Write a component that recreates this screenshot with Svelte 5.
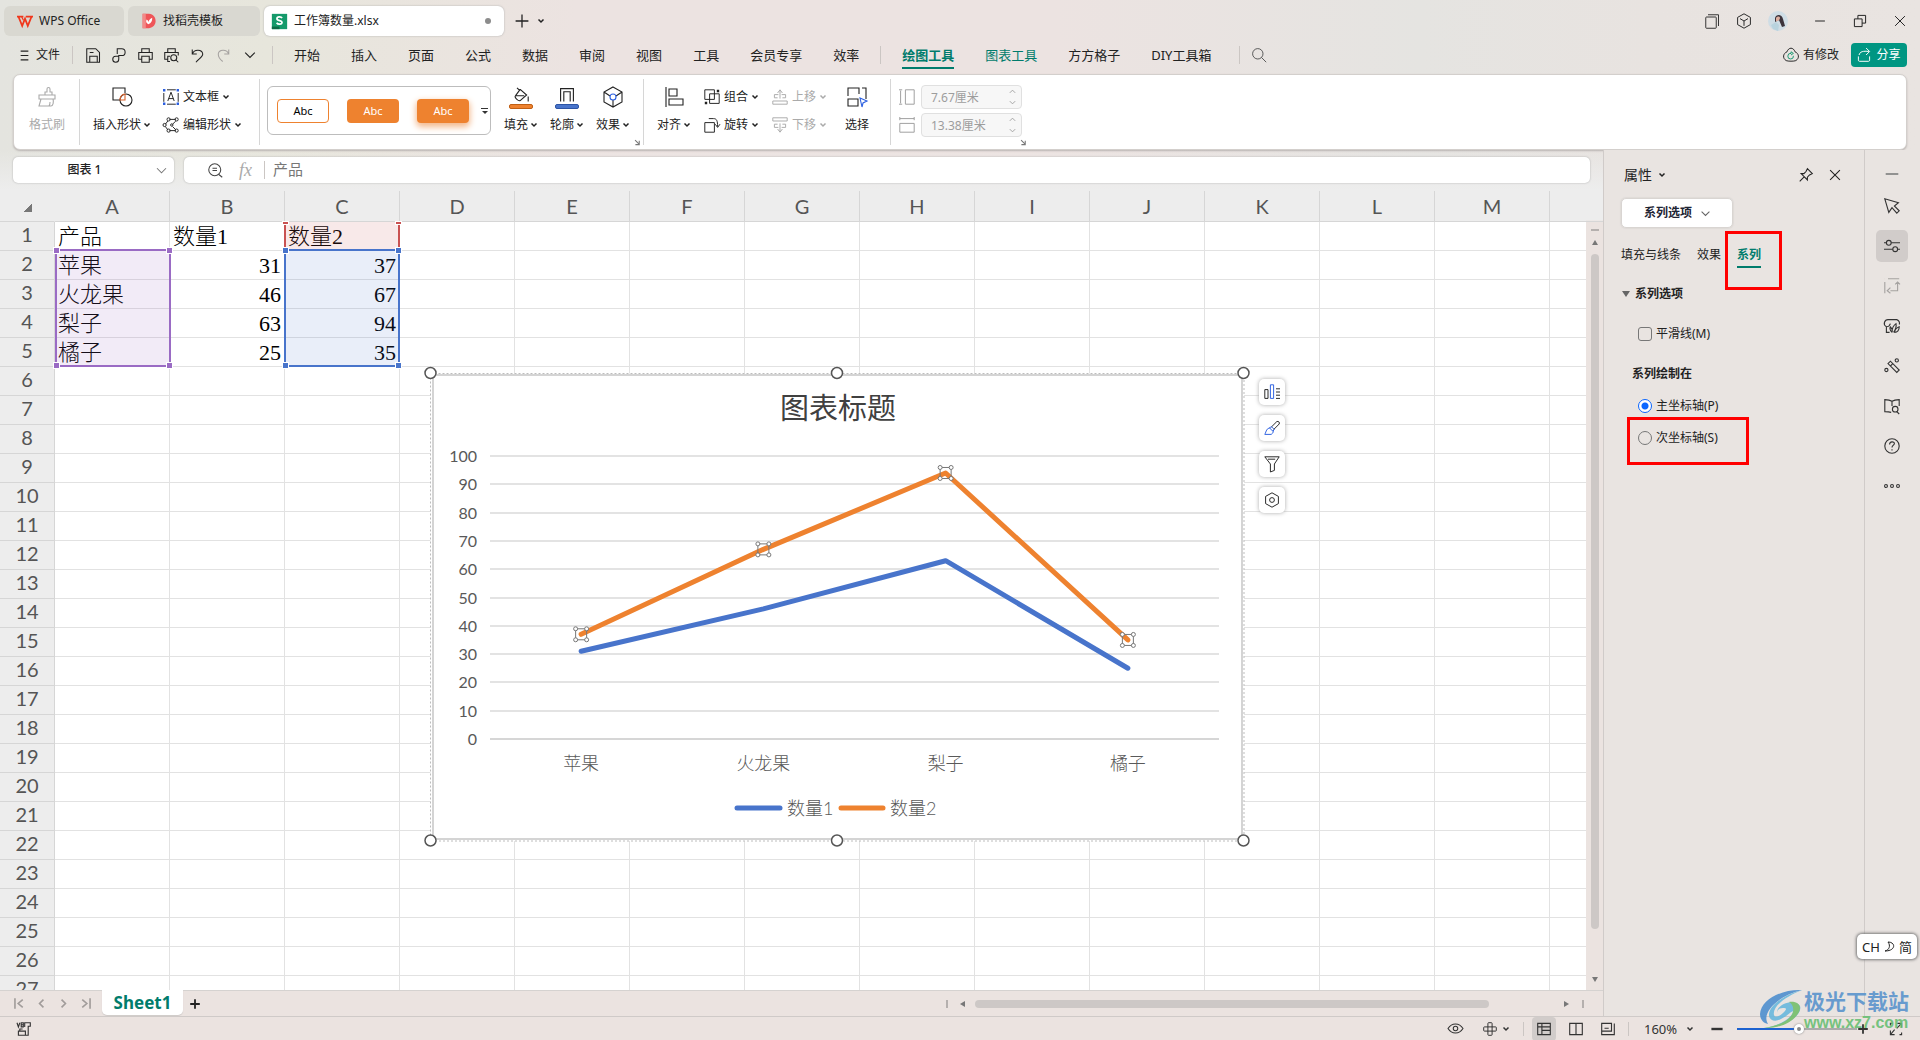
<script lang="ts">
	const icons: Record<string, string> = {
		wps: '<path d="M0 4.500h8M2 5l4.500 11L10 7l3.500 9L18 5M11 4.500h9" stroke="#f0371c" stroke-width="2.200"/><path d="M6 5l2 4" stroke="#f0371c" stroke-width="1.500"/>',
		docer: '<path d="M2 1h8c11 1 11 17 0 18H2z" fill="#ef5558" stroke="none"/><path d="M2 1h4v18H2z" fill="#f28a88" stroke="none"/><path d="M9 14c-3-2-3-4-2-6 2 1 3 3 2 6 0-4 2-7 5-8 0 4-1 7-5 8z" fill="#fff" stroke="none"/>',
		sheet: '<path d="M1 1h18v18H1z" fill="#159a6b" stroke="none"/><path d="M1 16h9v3H1z" fill="#0c6a45" stroke="none"/><path d="M13 6c-1-2-6-2-6 .8 0 2.900 6 1.600 6 4.200 0 2.800-5 2.800-6.300.5" stroke="#fff" stroke-width="2"/>',
		plus: '<path d="M10 2v16M2 10h16"/>',
		chevron: '<path d="M4 7l6 6 6-6"/>',
		menu: '<path d="M3 2h14M3 10h14M3 18h14"/>',
		save: '<path d="M1 1h12l5 5v13H1zM5 19v-8h10v8M5 6h5"/>',
		link: '<path d="M7 8V1h6a4.500 4.500 0 0 1 0 9H9v5a4 4 0 1 1-4-4h4"/>',
		print: '<path d="M5 6V1h10v5M5 15H1V6h18v9h-4M5 11h10v8H5z"/>',
		preview: '<path d="M5 6V1h10v5M5 15H1V6h18v4M8 18H5v-7h3M16 16l3 3"/><circle cx="13" cy="13" r="4"/>',
		undo: '<path d="M3 2v6h6M3 8c3-7 13-6 14 0 0 4-6 7-9 11"/>',
		redo: '<path d="M17 2v6h-6M17 8C14 1 4 2 3 8c0 4 2 7 6 10"/>',
		search: '<circle cx="8.500" cy="8.500" r="6.500"/><path d="M13 13l6 6"/>',
		windows: '<rect x="1" y="4" width="14" height="15" rx="1"/><path d="M4 1h14v15"/>',
		cube: '<path d="M10 1l8 4.500v9L10 19l-8-4.500v-9zM5 7l5 3 5-3M10 10v6"/>',
		minus: '<path d="M3 10h14"/>',
		restore: '<path d="M2 7h11v11H2zM7 7V2h11v11h-5"/>',
		close: '<path d="M3 3l14 14M17 3L3 17"/>',
		cloud: '<path d="M5 6c2-6 8-6 10 0 5 2 6 8 1 11-2 1-10 1-12 0-5-3-4-9 1-11z"/><path d="M13 11a3.500 3.500 0 1 1-3-3V6l3 2-3 2" stroke="#1a9a72"/>',
		share: '<path d="M2 12v5c0 2 1 2 2 2h12c1 0 2 0 2-2v-5M3 10c1-5 6-6 14-5M13 0l5 5-5 5"/>',
		brush: '<path d="M2 8h16v4H2zM4 12L2 19h12c2 0 3-4 2-7M8 8V5h2V2c0-2 3-2 3 0v3h2v3M12 19c1-1 1-2 1-4"/>',
		shapes: '<path d="M13 6V1H1v12h7"/><circle cx="14" cy="13" r="6"/><path d="M13 7v6H8c0-3 2-6 5-6z" stroke="#d9622b"/>',
		textbox: '<path d="M1 5v11M19 5v11M5 1h11M5 19h11"/><path d="M6 15l4-11 4 11M7 12h6"/><path d="M0 0h3v3H0zM17 0h3v3h-3zM0 17h3v3H0zM17 17h3v3h-3z" fill="#2b5fe0" stroke="none"/>',
		editshape: '<path d="M8 3h8M6 5l-3 4M3 12l3 4M8 17h8M16 5l-4 4M12 12l4 4"/><circle cx="7" cy="3" r="2"/><circle cx="17" cy="3" r="2"/><circle cx="2" cy="10" r="2"/><circle cx="11" cy="10" r="1.500"/><circle cx="7" cy="17" r="2"/><circle cx="17" cy="17" r="2"/>',
		bucket: '<path d="M5 1l3 3M9 3l8 7-8 7c-2 1-8-4-6-6l6-8M3 11h11M19 12v6"/>',
		outline: '<path d="M2 18V2h16v16M6 18V6h8v12"/>',
		effect: '<path d="M10 0l9 5v10l-9 5-9-5V5zM1 5l6 4M19 5l-6 4M10 13v7"/><circle cx="10" cy="10" r="3" stroke="#2b5fe0"/>',
		align: '<path d="M2 0v20M5 2h8v7H5zM5 12h14v6H5z"/>',
		group: '<path d="M1 1h12v12H1zM7 6h12v12H7z"/><path d="M16 1h3v3h-3zM1 16h3v3H1z" fill="currentColor" stroke="none"/>',
		rotate: '<path d="M1 7h12v12H1zM6 2h6c4 0 5 3 5 10M14 9l3 4 3-4"/>',
		up: '<path d="M1 15h18v4H1zM7 11H3V7h5M12 7h5v4h-4M10 12V2M7 5l3-4 3 4"/>',
		down: '<path d="M1 1h18v4H1zM7 9H3v4h5M12 13h5V9h-4M10 8v10M7 15l3 4 3-4"/>',
		select: '<path d="M1 9V1h11v6M15 1h4v11M1 12v7h10v-7z"/><path d="M13 11l7 3-4 2-1 4z" stroke="#2b5fe0"/>',
		height: '<path d="M2 2v16M0 1h4M0 19h4M8 1h11v18H8z"/>',
		width: '<path d="M1 2h18M1 0v4M19 0v4M1 8h18v11H1z"/>',
		corner: '<path d="M3 3l11 11M15 5v11H4"/>',
		zoom: '<circle cx="9" cy="9" r="8"/><path d="M14 15l5 4M6 7h6M6 10h6"/>',
		pin: '<path d="M12 1l7 7-4 2-3 3v4L3 8h4l3-3zM7 13l-6 6"/>',
		cursor: '<path d="M1 1l5 17 4-6 6 7 3-3-6-6 5-4z"/>',
		sliders: '<path d="M0 6h3M9 6h11M0 14h11M17 14h3"/><circle cx="6" cy="6" r="3"/><circle cx="14" cy="14" r="3"/>',
		axes: '<path d="M1 5v14M5 1h14M1 1h.1M8 16h9V6M14 8l3-3 3 3M8 12l-4 4 4 3"/>',
		gallery: '<path d="M7 18H3v-7C-2 8 1 2 5 2h11c3 1 4 4 3 6M3 11c2 0 4-1 5-4M10 18c-3-3-3-6-2-7 2 2 3 4 2 7 0-6 2-9 5-11 1 5-1 8-3 11M13 18c1-4 3-6 6-7 0 4-2 7-6 7"/>',
		magic: '<path d="M5 7l3-3 11 11-3 3zM8 10l3-3"/><circle cx="16" cy="3" r="2"/><circle cx="3" cy="15" r="2"/>',
		book: '<path d="M10 4C7 2 4 2 1 2v15c3 0 5 0 8 1M10 4c3-2 6-2 9-2v8M10 4v6M16 17l3 3"/><circle cx="14" cy="14" r="3.500"/>',
		help: '<circle cx="10" cy="10" r="9"/><path d="M7 8c0-4 6-4 6-1 0 2-3 2-3 5M10 14v1.500"/>',
		more: '<circle cx="2.500" cy="10" r="1.800"/><circle cx="10" cy="10" r="1.800"/><circle cx="17.500" cy="10" r="1.800"/>',
		chartEl: '<path d="M1 7h4v11H1zM15 6h5M15 10h5M15 14h5M15 18h5"/><path d="M8 1h4v17H8z" stroke="#2b5fe0"/>',
		chartBrush: '<path d="M9 9l7-7c2-1 4 1 3 3l-7 7"/><path d="M9 8l4 4-2 2-4-4zM8 10c-5 0-5 4-7 8h8c3-2 3-4 2-5" stroke="#2b5fe0"/>',
		filter: '<path d="M1 1h18l-6 9v8l-5 2V10zM5 4h9"/>',
		hexagon: '<path d="M10 1l8 4.500v9L10 19l-8-4.500v-9z"/><circle cx="10" cy="10" r="3"/>',
		first: '<path d="M3 2v16M15 4l-7 6 7 6"/>',
		prev: '<path d="M13 4l-6 6 6 6"/>',
		next: '<path d="M7 4l6 6-6 6"/>',
		last: '<path d="M17 2v16M5 4l7 6-7 6"/>',
		vb: '<path d="M0 1l2 6 2-6M6 1h3v6H6zM6 4h3M11 7V1h8v5h-3v13H2v-6h10v6M4 13v-3h4"/>',
		eye: '<path d="M0 10c5-8 15-8 20 0-5 8-15 8-20 0z"/><circle cx="10" cy="10" r="3"/>',
		cross: '<rect x="7" y="1" width="6" height="18" rx="1"/><rect x="1" y="7" width="18" height="6" rx="1"/>',
		gridview: '<path d="M1 2h18v16H1zM1 7h18M7 2v16M7 12h12"/>',
		pageview: '<path d="M1 2h18v16H1zM10 2v16"/>',
		readview: '<path d="M1 2h14v11H1zM1 13v5h18V2M5 9h6"/>',
		full: '<path d="M12 2h6v6M18 2l-7 7M8 18H2v-6M2 18l6-7M5 2H2v3M18 15v3h-3"/>'
	};

	const quick = ['save', 'link', 'print', 'preview', 'undo', 'redo'];
	const menus = ['开始', '插入', '页面', '公式', '数据', '审阅', '视图', '工具', '会员专享', '效率'];
	const rail = ['cursor', 'sliders', 'axes', 'gallery', 'magic', 'book', 'help', 'more'];
	const columns = 'ABCDEFGHIJKLMN'.split('');
	const data = [
		['产品', '数量1', '数量2'],
		['苹果', 31, 37],
		['火龙果', 46, 67],
		['梨子', 63, 94],
		['橘子', 25, 35]
	];
	const rows = Array.from({ length: 27 }, (_, i) => i);

	const names = data.slice(1).map((r) => r[0]);
	const ticks = [0, 10, 20, 30, 40, 50, 60, 70, 80, 90, 100];
	const px = (i: number) => 60 + (729 * (i + 0.5)) / 4;
	const py = (v: number) => 366 - 2.83 * v;
	const line = (col: number) => data.slice(1).map((r, i) => `${px(i)},${py(Number(r[col]))}`).join(' ');

	let axis = $state('primary');
	let smooth = $state(false);
	let zoom = $state(52);
</script>

{#snippet icon(name: string, size = 16, weight = 1.2)}
	<svg class="icon" width={size} height={size} viewBox="0 0 20 20" stroke-width={weight} aria-hidden="true">
		{@html icons[name]}
	</svg>
{/snippet}

{#snippet caret()}
	<svg class="icon" width="6" height="6" viewBox="0 0 6 6" stroke-width="1.5" aria-hidden="true"><path d="M.5 1.500L3 4l2.500-2.500" /></svg>
{/snippet}

{#snippet tall(name: string, label: string, drop: boolean, bar = '')}
	<button class="tall">
		<span class="pic">
			{@render icon(name, bar ? 16 : 20, bar ? 1.4 : 1.1)}
			{#if bar}<span class="bar {bar}"></span>{/if}
		</span>
		<span class="lbl">{label}{#if drop}{@render caret()}{/if}</span>
	</button>
{/snippet}

{#snippet small(name: string, label: string, off = false)}
	<button class="small" disabled={off}>{@render icon(name)}<span>{label}</span>{@render caret()}</button>
{/snippet}

<div class="app">
	<header class="title">
		<button class="doc home">{@render icon('wps', 16)}WPS Office</button>
		<button class="doc docer">{@render icon('docer', 16)}找稻壳模板</button>
		<button class="doc active">{@render icon('sheet', 17)}工作簿数量.xlsx<i class="dirty"></i></button>
		<button class="new" aria-label="新建">{@render icon('plus', 16, 1.6)}</button>
		<button aria-label="标签列表">{@render caret()}</button>
		<div class="win">
			<button aria-label="窗口">{@render icon('windows', 15)}</button>
			<button aria-label="应用">{@render icon('cube', 16)}</button>
			<svg class="avatar" width="20" height="20" viewBox="0 0 20 20" aria-hidden="true">
				<circle cx="10" cy="10" r="10" fill="#cfdde5" />
				<path d="M7 7c1-4 7-4 8 1l2 7-3 1-3-7-4 2z" fill="#3b333b" />
				<path d="M8 7c1-2 4-2 4 0s-3 4-4 3z" fill="#dcae9f" />
				<path d="M3 14l5-3 3 3-1 6-5-2z" fill="#b9d3de" />
			</svg>
			<button class="wide" aria-label="最小化">{@render icon('minus', 14, 1.4)}</button>
			<button class="wide" aria-label="还原">{@render icon('restore', 14, 1.4)}</button>
			<button class="wide" aria-label="关闭">{@render icon('close', 14, 1.4)}</button>
		</div>
	</header>

	<nav class="menubar">
		<button class="file">{@render icon('menu', 11, 2)}文件</button>
		<i class="sep"></i>
		<div class="quick">
			{#each quick as q}
				<button class:faded={q === 'redo'} aria-label={q}>{@render icon(q, 15, 1.4)}</button>
			{/each}
			<button aria-label="更多">{@render icon('chevron', 16, 1.4)}</button>
		</div>
		<i class="sep"></i>
		<div class="menus">
			{#each menus as m}<button>{m}</button>{/each}
			<i class="sep"></i>
			<button class="current">绘图工具</button>
			<button class="green">图表工具</button>
			<button>方方格子</button>
			<button>DIY工具箱</button>
		</div>
		<i class="sep"></i>
		<button class="find" aria-label="搜索">{@render icon('search', 16)}</button>
		<button class="changed">{@render icon('cloud', 16)}有修改</button>
		<button class="share">{@render icon('share', 14, 1.4)}分享</button>
	</nav>

	<section class="ribbon">
		<div class="group paint">{@render tall('brush', '格式刷', false)}</div>
		<div class="group insert">
			{@render tall('shapes', '插入形状', true)}
			<div class="pair">
				{@render small('textbox', '文本框')}
				{@render small('editshape', '编辑形状')}
			</div>
		</div>
		<div class="group style">
			<div class="gallery">
				<button class="abc hollow">Abc</button>
				<button class="abc">Abc</button>
				<button class="abc glow">Abc</button>
				<button class="expand" aria-label="更多样式"></button>
			</div>
			{@render tall('bucket', '填充', true, 'orange')}
			{@render tall('outline', '轮廓', true, 'blue')}
			{@render tall('effect', '效果', true)}
			<button class="launch" aria-label="设置形状格式">{@render icon('corner', 7, 3)}</button>
		</div>
		<div class="group arrange">
			{@render tall('align', '对齐', true)}
			<div class="pair">
				{@render small('group', '组合')}
				{@render small('rotate', '旋转')}
			</div>
			<div class="pair off">
				{@render small('up', '上移', true)}
				{@render small('down', '下移', true)}
			</div>
			{@render tall('select', '选择', false)}
		</div>
		<div class="group size">
			<div class="dims">
				<label>{@render icon('height')}<input value="7.67厘米" aria-label="高度" disabled /><span class="spin">{@render icon('next', 9, 2)}{@render icon('next', 9, 2)}</span></label>
				<label>{@render icon('width')}<input value="13.38厘米" aria-label="宽度" disabled /><span class="spin">{@render icon('next', 9, 2)}{@render icon('next', 9, 2)}</span></label>
			</div>
			<button class="launch" aria-label="大小和属性">{@render icon('corner', 7, 3)}</button>
		</div>
	</section>

	<div class="work">
		<main>
			<div class="formula">
				<div class="namebox">
					<input value="图表 1" aria-label="名称框" />
					<button aria-label="名称列表">{@render icon('chevron', 15, 1.4)}</button>
				</div>
				<div class="fx">
					{@render icon('zoom', 15, 1.4)}
					<em>fx</em>
					<i class="sep"></i>
					<input value="产品" aria-label="编辑栏" />
				</div>
			</div>

			<div class="sheet">
				<div class="cells">
					<table>
						<thead>
							<tr>
								<th class="all"><i></i></th>
								{#each columns as c}<th>{c === 'N' ? '' : c}</th>{/each}
							</tr>
						</thead>
						<tbody>
							{#each rows as r}
								<tr>
									<th>{r + 1}</th>
									{#each columns as _, c}
										<td class:num={typeof data[r]?.[c] === 'number'}>{data[r]?.[c] ?? ''}</td>
									{/each}
								</tr>
							{/each}
						</tbody>
					</table>

					<div class="range purple"><i></i><i></i><i></i><i></i></div>
					<div class="range red"><i></i><i></i></div>
					<div class="range navy"><i></i><i></i><i></i><i></i></div>

					<svg class="chart" width="814" height="468" viewBox="0 0 814 468">
						<rect x=".5" y=".5" width="813.500" height="467.500" fill="#fff" stroke="#bdbdbd" stroke-dasharray="2 2" />
						<rect x="3" y="2" width="809" height="464" fill="#fff" stroke="#d4d4d4" stroke-width="2" />
						<text class="heading" x="408" y="46">图表标题</text>
						{#each ticks as t}
							<line x1="60" x2="789" y1={Math.round(py(t))} y2={Math.round(py(t))} stroke={t ? '#e3e3e3' : '#d6d6d6'} stroke-width="2" />
							<text class="tick" x="47" y={Math.round(py(t)) + 6}>{t}</text>
						{/each}
						{#each names as n, i}
							<text class="cat" x={px(i)} y="397">{n}</text>
						{/each}
						<polyline points={line(1)} stroke="#4874cb" />
						<polyline points={line(2)} stroke="#ee822f" />
						{#each data.slice(1) as d, i}
							<g class="marker" transform="translate({px(i)} {py(Number(d[2]))})">
								<path d="M-5.500-5.500h11v11h-11z" fill="none" />
								{#each [[-5.5, -5.5], [5.5, -5.5], [-5.5, 5.5], [5.5, 5.5]] as [x, y]}
									<circle cx={x} cy={y} r="2" />
								{/each}
							</g>
						{/each}
						<polyline points="307,435 350,435" stroke="#4874cb" />
						<text class="key" x="357" y="442">数量1</text>
						<polyline points="411,435 453,435" stroke="#ee822f" />
						<text class="key" x="460" y="442">数量2</text>
						{#each [0.5, 407, 813.5] as x}
							{#each [0, 467.5] as y}
								<circle class="handle" cx={x} cy={y} r="5.500" />
							{/each}
						{/each}
					</svg>

					<div class="tools">
						<button aria-label="图表元素">{@render icon('chartEl')}</button>
						<button aria-label="图表样式">{@render icon('chartBrush')}</button>
						<button aria-label="图表筛选器">{@render icon('filter')}</button>
						<button aria-label="设置图表区域格式">{@render icon('hexagon')}</button>
					</div>
				</div>
				<div class="vscroll">
					<i class="dash"></i>
					<i class="tri up"></i>
					<i class="thumb"></i>
					<i class="tri dn"></i>
				</div>
			</div>

			<div class="tabs">
				<div class="nav">
					{#each ['first', 'prev', 'next', 'last'] as n}
						<button aria-label={n}>{@render icon(n, 13, 2.5)}</button>
					{/each}
				</div>
				<button class="tab">Sheet1</button>
				<button class="add" aria-label="新建工作表">{@render icon('plus', 12, 3)}</button>
				<div class="hscroll">
					<i class="stop"></i>
					<i class="tri lt"></i>
					<i class="thumb"></i>
					<i class="tri rt"></i>
					<i class="stop"></i>
				</div>
			</div>
		</main>

		<aside class="panel">
			<div class="head">
				<span>属性</span>{@render caret()}
				<button class="pin" aria-label="固定">{@render icon('pin', 14, 1.5)}</button>
				<button aria-label="关闭">{@render icon('close', 14, 1.5)}</button>
			</div>
			<div class="pick">
				<select aria-label="图表区域"><option>系列选项</option></select>
				{@render icon('chevron', 13, 1.6)}
			</div>
			<div class="ptabs">
				<button>填充与线条</button>
				<button>效果</button>
				<button class="on">系列</button>
			</div>
			<h3><i></i>系列选项</h3>
			<label class="opt smooth"><input type="checkbox" bind:checked={smooth} />平滑线(M)</label>
			<h4>系列绘制在</h4>
			<label class="opt"><input type="radio" name="axis" value="primary" bind:group={axis} />主坐标轴(P)</label>
			<label class="opt"><input type="radio" name="axis" value="secondary" bind:group={axis} />次坐标轴(S)</label>
			<div class="callout first"></div>
			<div class="callout second"></div>
		</aside>

		<nav class="rail">
			<button class="fold" aria-label="收起">{@render icon('minus', 18, 2)}</button>
			{#each rail as r}
				<button class:on={r === 'sliders'} class:faded={r === 'axes'} aria-label={r}>{@render icon(r, 16, 1.4)}</button>
			{/each}
		</nav>
	</div>

	<footer class="status">
		{@render icon('vb', 14, 1.6)}
		<button class="eye" aria-label="护眼模式">{@render icon('eye', 15, 1.4)}</button>
		<button class="cross" aria-label="阅读模式">{@render icon('cross', 14, 1.4)}{@render caret()}</button>
		<i class="sep"></i>
		<div class="views">
			<button class="on" aria-label="普通视图">{@render icon('gridview', 14, 1.6)}</button>
			<button aria-label="分页预览">{@render icon('pageview', 14, 1.6)}</button>
			<button aria-label="阅读视图">{@render icon('readview', 14, 1.6)}</button>
		</div>
		<i class="sep"></i>
		<div class="percent">
			<select aria-label="缩放比例"><option>160%</option></select>{@render caret()}
		</div>
		<button aria-label="缩小">{@render icon('minus', 16, 3)}</button>
		<input
			class="slider"
			type="range"
			aria-label="缩放"
			bind:value={zoom}
			style="background-size: {zoom}% 2px, 100% 2px"
		/>
		<button aria-label="放大">{@render icon('plus', 12, 3)}</button>
		<button class="full" aria-label="全屏">{@render icon('full', 14, 1.6)}</button>
	</footer>

	<div class="ime"><span>CH</span><svg class="icon" width="11" height="12" viewBox="0 0 11 12" stroke-width="1"><path d="M4 1c8 0 8 9-3 9 4-1 6-5 3-9z" /></svg><span>简</span></div>

	<div class="mark">
		<svg width="44" height="42" viewBox="0 0 44 42" aria-hidden="true">
			<path d="M43 1C22 0 2 11 1 25c0 5 3 9 8 10C2 24 18 7 43 1z" fill="#4f8fcf" />
			<path d="M43 1C28 7 13 17 15 26c1 3 6 1 9-2 4-4 4-5 0-5-5 0-6 3-6 5C17 15 36 9 41 17c3 9-15 22-36 22 14-2 27-9 29-16 0-3-4 3-12 7-5 3-11 2-12-3C9 16 27 5 43 1z" fill="#6ab8dd" />
			<path d="M30 13c9-1 13 4 10 10-5 10-20 17-35 16 15-2 27-8 29-16 1-5-1-8-4-10z" fill="#75bf6b" />
		</svg>
		<div>
			<strong>极光下载站</strong>
			<b>www.xz7.com</b>
		</div>
	</div>
</div>

<style>
	:global(body) {
		margin: 0;
		background: #e9e4e1;
	}

	.app {
		position: relative;
		display: flex;
		flex-direction: column;
		height: 100vh;
		overflow: hidden;
		color: #222;
		font-family: 'Noto Sans', 'Noto Sans CJK SC', sans-serif;
		font-size: 12px;
		line-height: 20px;
		background: linear-gradient(90deg, #e4e4df, #e7e6dc 14%, #ece3e1 30%, #ece3e1 55%, #e5e4e1 74%, #e8e3e0 86%, #e9e4e1);
	}

	button,
	input,
	select {
		margin: 0;
		padding: 0;
		border: none;
		background: none;
		color: inherit;
		font: inherit;
		appearance: none;
	}

	button {
		display: flex;
		align-items: center;
		justify-content: center;
		white-space: nowrap;
	}

	input:focus,
	select:focus {
		outline: none;
	}

	.icon {
		flex: none;
		fill: none;
		stroke: currentColor;
		overflow: visible;
	}

	.sep {
		flex: none;
		width: 1px;
		height: 18px;
		background: #cbc6c3;
	}

	.faded {
		color: #a5a2a0;
	}

	/* title bar */
	.title {
		display: flex;
		align-items: center;
		gap: 4px;
		height: 30px;
		padding: 6px 13px 0 4px;
	}

	.doc {
		height: 30px;
		box-sizing: border-box;
		justify-content: flex-start;
		gap: 6px;
		border-radius: 6px;
		background: #d9d8d1;
	}

	.home {
		width: 120px;
		padding-left: 13px;
	}

	.docer {
		width: 132px;
		padding-left: 13px;
	}

	.active {
		width: 240px;
		padding: 0 13px 0 7px;
		background: #fff;
		box-shadow: 0 0 2px #aaa;
	}

	.dirty {
		width: 6px;
		height: 6px;
		margin-left: auto;
		border-radius: 50%;
		background: #8c8c8c;
	}

	.new {
		margin: 0 4px 0 6px;
	}

	.win {
		display: flex;
		align-items: center;
		gap: 16px;
		margin-left: auto;
	}

	.wide {
		width: 24px;
	}

	.avatar {
		margin-right: 4px;
	}

	.wide:last-child {
		width: 14px;
		margin-left: 5px;
	}

	/* menu bar */
	.menubar {
		display: flex;
		align-items: center;
		height: 38px;
		padding: 0 13px 0 19px;
	}

	.file {
		gap: 6px;
		margin-right: 12px;
	}

	.quick {
		display: flex;
		gap: 11px;
		margin: 0 14px 0 13px;
	}

	.menus {
		display: flex;
		align-items: center;
		gap: 31px;
		margin: 0 28px 0 21px;
		font-size: 13px;
	}

	.menus .sep {
		margin: 0 -10px;
	}

	.menus button {
		height: 28px;
	}

	.menus .current {
		box-sizing: border-box;
		color: #007c6c;
		font-weight: 700;
		border-top: 2px solid transparent;
		border-bottom: 2px solid #007c6c;
	}

	.green {
		color: #007c6c;
	}

	.find {
		margin-left: 11px;
		color: #555;
	}

	.changed {
		gap: 4px;
		margin: 0 12px 0 auto;
	}

	.share {
		width: 56px;
		height: 24px;
		gap: 5px;
		border-radius: 4px;
		background: #009682;
		color: #fff;
	}

	/* ribbon */
	.ribbon {
		display: flex;
		flex: none;
		height: 76px;
		box-sizing: border-box;
		margin: 0 13px;
		border: 1px solid #d3cfcc;
		border-radius: 7px;
		background: #fff;
		box-shadow: 0 1px 2px #b9b4b2;
	}

	.group {
		position: relative;
		display: flex;
		align-items: flex-start;
		box-sizing: border-box;
		padding-top: 12px;
	}

	.group:not(:last-child)::after {
		content: '';
		position: absolute;
		right: 0;
		top: 4px;
		bottom: 4px;
		width: 1px;
		background: #d6d6d6;
	}

	.paint {
		width: 66px;
		justify-content: center;
		color: #aaa;
	}

	.insert {
		width: 180px;
		padding-left: 13px;
		gap: 13px;
	}

	.style {
		width: 384px;
		padding-left: 7px;
		gap: 13px;
	}

	.arrange {
		width: 247px;
		padding-left: 13px;
		gap: 14px;
	}

	.arrange .off {
		margin-right: 5px;
	}

	.size {
		width: 139px;
		padding: 10px 0 0 8px;
	}

	.tall {
		flex-direction: column;
		gap: 6px;
	}

	.pic {
		display: flex;
		flex-direction: column;
		align-items: center;
		justify-content: space-between;
		height: 22px;
	}

	.bar {
		width: 22px;
		height: 3px;
		border: 1px solid #c05f14;
		border-radius: 2px;
		background: #ee822f;
	}

	.bar.blue {
		border-color: #2d55a5;
		background: #4874cb;
	}

	.lbl {
		display: flex;
		align-items: center;
		gap: 3px;
	}

	.pair {
		display: flex;
		flex-direction: column;
		align-items: flex-start;
		gap: 8px;
	}

	.small {
		height: 20px;
		gap: 4px;
	}

	.small:disabled {
		color: #aaa;
	}

	.gallery {
		display: flex;
		align-items: center;
		gap: 18px;
		width: 224px;
		height: 49px;
		box-sizing: border-box;
		margin-top: -1px;
		padding-left: 9px;
		border: 1px solid #bdbdbd;
		border-radius: 6px;
	}

	.abc {
		flex: none;
		width: 52px;
		height: 24px;
		box-sizing: border-box;
		border-radius: 4px;
		background: #ee822f;
		color: #fff;
		font-size: 11px;
	}

	.hollow {
		border: 1px solid #ee822f;
		background: #fff;
		color: #000;
	}

	.glow {
		box-shadow: 0 3px 6px 1px #f3b98e;
	}

	.expand {
		margin-left: -6px;
		width: 7px;
		border-top: 1px solid #333;
		padding-top: 2px;
	}

	.expand::after {
		content: '';
		border: 3px solid transparent;
		border-top-color: #333;
		border-bottom: 0;
	}

	.launch {
		position: absolute;
		right: 3px;
		bottom: 3px;
		color: #777;
	}

	.dims {
		display: flex;
		flex-direction: column;
		gap: 4px;
	}

	.dims label {
		display: flex;
		align-items: center;
		gap: 6px;
		height: 24px;
		color: #9d9d9d;
	}

	.dims input {
		width: 101px;
		height: 24px;
		box-sizing: border-box;
		padding-left: 9px;
		border: 1px solid #e0e0e0;
		border-radius: 4px;
		background: #f7f7f7;
	}

	.spin {
		display: flex;
		flex-direction: column;
		gap: 2px;
		margin-left: -20px;
	}

	.spin .icon {
		transform: rotate(-90deg);
	}

	.spin .icon:last-child {
		transform: rotate(90deg);
	}

	/* main area */
	.work {
		display: grid;
		grid-template-columns: minmax(0, 1fr) 261px 56px;
		flex: 1;
		min-height: 0;
	}

	main {
		display: flex;
		flex-direction: column;
		min-height: 0;
		background: linear-gradient(#ede3e100, #ededed 40px, #ededed 70px, #ebe3e0 71px);
	}

	.formula {
		display: flex;
		gap: 10px;
		padding: 7px 13px 8px;
	}

	.namebox,
	.fx {
		display: flex;
		align-items: center;
		height: 26px;
		border-radius: 5px;
		background: #fff;
		box-shadow: 0 0 2px #aaa;
	}

	.namebox {
		width: 161px;
		color: #222;
	}

	.namebox input {
		flex: 1;
		min-width: 0;
		padding-left: 8px;
		text-align: center;
		font-weight: 500;
	}

	.namebox button {
		width: 26px;
		color: #777;
	}

	.fx {
		flex: 1;
		padding-left: 24px;
		color: #444;
	}

	.fx em {
		margin: 0 12px 0 16px;
		color: #aaa;
		font-family: 'Liberation Serif', serif;
		font-size: 18px;
	}

	.fx input {
		flex: 1;
		padding: 0 0 2px 8px;
		color: #777;
		font-size: 15px;
	}

	.sheet {
		display: flex;
		flex: 1;
		min-height: 0;
		border-bottom: 1px solid #d5d2d0;
	}

	.cells {
		position: relative;
		flex: 1;
		min-width: 0;
		overflow: hidden;
		background: #fff;
	}

	table {
		table-layout: fixed;
		width: 1665px;
		border-collapse: separate;
		border-spacing: 0;
	}

	th,
	td {
		width: 115px;
		height: 29px;
		box-sizing: border-box;
		padding: 0;
		border-right: 1px solid #e2e2e2;
		border-bottom: 1px solid #e2e2e2;
		line-height: 28px;
		white-space: nowrap;
	}

	th {
		background: #ededed;
		border-color: #d6d6d6;
		color: #555;
		font-family: Lato, sans-serif;
		font-size: 20px;
		font-weight: 400;
	}

	thead th {
		height: 31px;
	}

	tbody th {
		padding-bottom: 4px;
		line-height: 24px;
	}

	th:first-child {
		width: 55px;
	}

	.all {
		border-right-color: #ededed;
	}

	.all i {
		display: block;
		margin: 2px 0 0 23px;
		width: 9px;
		height: 9px;
		background: linear-gradient(135deg, transparent 50%, #777 50%);
	}

	td {
		padding: 2px 3px 0;
		color: #000;
		font-family: 'Liberation Serif', 'Noto Sans CJK SC', serif;
		font-size: 22px;
		font-weight: 300;
		line-height: 26px;
	}

	td.num {
		text-align: right;
	}

	.range {
		position: absolute;
		left: 284px;
		top: 58px;
		width: 112px;
		height: 114px;
		border: 2px solid #4874cb;
		background: #4874cb1f;
	}

	.range i {
		position: absolute;
		left: -4px;
		top: -4px;
		width: 5px;
		height: 5px;
		border: 1px solid #fff;
		background: #4874cb;
	}

	.range i:nth-child(2n) {
		left: auto;
		right: -4px;
	}

	.range i:nth-child(n + 3) {
		top: auto;
		bottom: -4px;
	}

	.purple {
		left: 55px;
		border-color: #9a6bc4;
		background: #9a6bc422;
	}

	.purple i {
		background: #9a6bc4;
	}

	.red {
		top: 31px;
		height: 29px;
		border-color: #c95252;
		border-width: 0 2px;
		background: #c9525220;
	}

	.red i {
		top: -1px;
		height: 2px;
		background: #c95252;
	}

	.chart {
		position: absolute;
		left: 430px;
		top: 182px;
		overflow: visible;
	}

	.chart text {
		font-family: Lato, 'Noto Sans CJK SC', sans-serif;
		fill: #595959;
	}

	.chart .heading {
		font-size: 29px;
		text-anchor: middle;
		fill: #404040;
	}

	.chart .tick {
		font-size: 16px;
		text-anchor: end;
	}

	.chart .cat {
		font-size: 18px;
		font-weight: 300;
		text-anchor: middle;
	}

	.chart .key {
		font-size: 18px;
		font-weight: 300;
	}

	.chart polyline {
		fill: none;
		stroke-width: 5;
		stroke-linecap: round;
		stroke-linejoin: round;
	}

	.marker {
		stroke: #777;
		fill: #fff;
	}

	.handle {
		fill: #fff;
		stroke: #555;
		stroke-width: 1.5;
	}

	.tools {
		position: absolute;
		left: 1259px;
		top: 188px;
		display: flex;
		flex-direction: column;
		gap: 10px;
	}

	.tools button {
		width: 26px;
		height: 26px;
		border-radius: 5px;
		background: #fff;
		box-shadow: 0 0 4px #aaa;
	}

	.vscroll {
		display: flex;
		flex-direction: column;
		align-items: center;
		width: 17px;
		margin-top: 30px;
		padding: 7px 0 8px;
		box-sizing: border-box;
		border-top: 1px solid #d6d6d6;
	}

	.dash {
		width: 8px;
		height: 2px;
		margin-bottom: 9px;
		background: #b5b0ae;
	}

	.tri {
		border: 3px solid transparent;
	}

	.tri.up {
		border-bottom: 5px solid #777;
		border-top: 0;
	}

	.tri.dn {
		border-top: 5px solid #777;
		border-bottom: 0;
	}

	.tri.lt {
		border-right: 5px solid #777;
		border-left: 0;
	}

	.tri.rt {
		border-left: 5px solid #777;
		border-right: 0;
	}

	.vscroll .thumb {
		flex: 1;
		width: 8px;
		margin: 9px 0 48px;
		border-radius: 4px;
		background: #cdc8c6;
	}

	.tabs {
		display: flex;
		align-items: center;
		height: 25px;
	}

	.nav {
		display: flex;
		gap: 9px;
		width: 89px;
		padding-left: 13px;
		color: #a19c9a;
	}

	.tab {
		width: 81px;
		height: 25px;
		margin-top: -2px;
		border-radius: 0 0 5px 5px;
		background: #fff;
		color: #007c6c;
		font-size: 17px;
		font-weight: 700;
		box-shadow: 0 1px 1px #cfcac8;
	}

	.add {
		margin-left: 6px;
	}

	.hscroll {
		display: flex;
		align-items: center;
		width: 638px;
		margin: 0 19px 0 auto;
	}

	.stop {
		width: 2px;
		height: 8px;
		background: #b5b0ae;
	}

	.lt {
		margin: 0 10px 0 12px;
	}

	.rt {
		margin: 0 13px 0 auto;
	}

	.hscroll .thumb {
		width: 514px;
		height: 8px;
		border-radius: 4px;
		background: #cdc8c6;
	}

	/* properties panel */
	.panel {
		position: relative;
		box-sizing: border-box;
		padding: 10px 22px 0 17px;
		border-left: 1px solid #d0cbc9;
		background: #e9e4e1;
	}

	.head {
		display: flex;
		align-items: center;
		gap: 7px;
		height: 30px;
		padding-left: 3px;
		font-size: 14px;
	}

	.pin {
		margin: 0 8px 0 auto;
	}

	.pick {
		display: flex;
		align-items: center;
		width: 112px;
		height: 30px;
		box-sizing: border-box;
		margin-top: 8px;
		padding-left: 22px;
		border: 1px solid #d9d5d2;
		border-radius: 5px;
		background: #fff;
		box-shadow: 0 0 1px 1px #dfdbd8;
	}

	.pick select {
		width: 55px;
		color: #1d2433;
		font-weight: 700;
	}

	.pick .icon {
		color: #666;
	}

	.ptabs {
		display: flex;
		gap: 16px;
		margin-top: 15px;
	}

	.ptabs button {
		box-sizing: border-box;
		height: 25px;
		border-bottom: 2px solid transparent;
	}

	.ptabs .on {
		border-color: #007c6c;
		color: #007c6c;
		font-weight: 700;
	}

	h3,
	h4 {
		margin: 0;
		font-size: 12px;
		font-weight: 700;
	}

	h3 {
		display: flex;
		align-items: center;
		gap: 5px;
		margin-top: 16px;
		padding-left: 1px;
	}

	h3 i {
		border: 4px solid transparent;
		border-top: 6px solid #666;
		border-bottom: 0;
	}

	h4 {
		margin-top: 20px;
		padding-left: 11px;
	}

	.opt {
		display: flex;
		align-items: center;
		gap: 4px;
		margin-top: 12px;
		padding-left: 17px;
	}

	.smooth {
		margin-top: 20px;
	}

	.opt input {
		width: 14px;
		height: 14px;
		box-sizing: border-box;
		border: 1px solid #777;
		border-radius: 3px;
	}

	.opt input[type='radio'] {
		border-radius: 50%;
	}

	.opt input:checked {
		border-color: #0a66ff;
		background: radial-gradient(#0a66ff 3px, #fff 4px);
	}

	.callout {
		position: absolute;
		box-sizing: border-box;
		border: 3px solid #f00;
	}

	.callout.first {
		left: 121px;
		top: 81px;
		width: 57px;
		height: 59px;
	}

	.callout.second {
		left: 23px;
		top: 267px;
		width: 122px;
		height: 48px;
	}

	.rail {
		display: flex;
		flex-direction: column;
		gap: 8px;
		padding: 8px 11px;
		border-left: 1px solid #d0cbc9;
		color: #333;
		background: #e9e4e1;
	}

	.rail button {
		width: 32px;
		height: 32px;
		border-radius: 5px;
	}

	.rail .fold {
		margin-bottom: -8px;
		color: #888;
	}

	.rail .faded {
		color: #a5a2a0;
	}

	.rail .on {
		background: #d1ccca;
	}

	/* status bar */
	.status {
		display: flex;
		align-items: center;
		height: 24px;
		box-sizing: border-box;
		padding: 0 17px;
		border-top: 1px solid #cfcac8;
		background: #ebe3e0;
		color: #333;
	}

	.status .sep {
		height: 14px;
	}

	.eye {
		margin: 0 20px 0 auto;
	}

	.cross {
		gap: 6px;
		margin-right: 14px;
	}

	.views {
		display: flex;
		gap: 8px;
		margin: 0 8px;
	}

	.views button {
		width: 24px;
		height: 24px;
		border-radius: 4px;
	}

	.views .on {
		background: #d1ccca;
	}

	.percent {
		display: flex;
		align-items: center;
		margin: 0 16px 0 15px;
		font-size: 13px;
	}

	.percent select {
		width: 43px;
	}

	.slider {
		width: 120px;
		height: 12px;
		margin: 0 0 0 12px;
		background: linear-gradient(#1e62d0, #1e62d0) left / 50% 2px no-repeat, linear-gradient(#aaa, #aaa) left / 100% 2px no-repeat;
	}

	.slider::-webkit-slider-thumb {
		appearance: none;
		width: 10px;
		height: 10px;
		border: 3px solid #fff;
		border-radius: 50%;
		background: #888;
		box-shadow: 0 0 2px #777;
	}

	.full {
		margin-left: 20px;
	}

	.ime {
		position: absolute;
		right: 3px;
		bottom: 81px;
		display: flex;
		align-items: center;
		justify-content: center;
		gap: 4px;
		width: 60px;
		height: 25px;
		border-radius: 5px;
		background: #fff;
		box-shadow: 0 0 3px 1px #777;
		font-size: 13px;
	}

	/* site watermark, bottom right */
	.mark {
		position: absolute;
		right: 11px;
		bottom: 7px;
		display: flex;
		gap: 1px;
		opacity: 0.9;
		pointer-events: none;
	}

	.mark div {
		display: flex;
		flex-direction: column;
	}

	.mark strong {
		color: #5b94cd;
		font-size: 21px;
		line-height: 24px;
	}

	.mark b {
		color: #69bf74;
		font-family: 'Liberation Sans', sans-serif;
		font-size: 16px;
		line-height: 20px;
	}
</style>
